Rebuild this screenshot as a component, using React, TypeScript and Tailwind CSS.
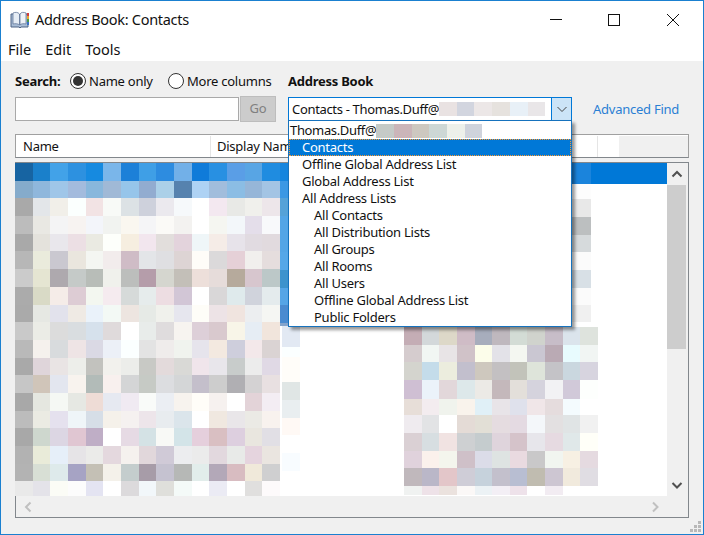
import { Fragment } from "react";

const font = "[font-family:'Noto_Sans',sans-serif]";

const leftRows = [
  "1764a2 1a80cb 42a2e8 2d91e0 168ae0 7ab6ea 1c80d8 3f9fe6 2d8ce0 72b0e8 0f7bd9 2890e2 5a9ee6 58a5e4 1f8ce0",
  "85abcb 8fb7dc 9fc6e8 a3bbdd 88b7dc a0b9d6 96c5ea 92acd0 abd0e8 5682ae aed2f4 a1bddc 8bbde4 96b6d8 a3c4e4",
  "a9a9a9 e3e6e9 f1efe9 fbfffe f2e3e4 f8faf7 dce2e5 ced1dc ebe9ee f6f9fb ffffff f3e8f0 e8e9e6 f0f0ec ede6ea",
  "bcbcbc e9e8e3 f4f4f5 f7f3f1 f3f5fa f1f3f0 faf7f0 f5f5f7 fbfaf7 f3f2f0 ffffff f5f6f1 f3f7fa e4deea f8f9fb",
  "a9a9a9 e4e2dc e9e7ec ecdfe4 eaeae2 fdfffb f6eee0 f2e6ee e2dedc e3d3dc eff6f8 f5ece7 e7e3ea e1dbe1 e1dade",
  "b7b7b7 eaebdc cac8d0 eae6de f4f6f2 f2ecec cfbcc6 e3e5e8 dfdfe2 ddd4d4 fefcf8 dbd9da e5d0d7 f1efed e5dddd",
  "cbcbcb e5e5d2 aea9ae c5cac8 b8bdb8 f0f1ec bcbebc b59daa d5d6cf c3bfb8 eddfda e6dcda b6aa9c d7c6ce bcc8c8",
  "ababab d9dac6 f5ece8 ddccd4 f3f7f0 f5ebef d6dad9 e6ecec eddde2 d2c6d6 ffffff d9d7d8 dfeaec d0d3dc e4ebed",
  "aaaaaa e6e8e3 e2e2ec efeae4 eaf2fa f3f9f5 ede5e0 e6eae6 f0f1ec e6e6ee fefdf8 ede3e6 f0e4df eceef0 f5f6f3",
  "c9c9c9 ebece6 dcdcdc d9dde0 d6e1ec dfdadb ffffff e8ecea dfdcdd f7f4f0 ddcfd8 d9c9ce f8f5e8 e6edf4 f1e5dc",
  "b9b9b9 f5f1ed d8dbdd eee4e5 dad9e4 ecf0f7 fbffff e3e3e3 efeceb f0f3ee e6e4ec f3e9e0 cecedc f3e8ea dad3d3",
  "a9a9a9 dfd5da e9e4e4 edeeea c2c2be f2f1ed ecedea c8c9c5 e3dadb d9d9d6 f0e5eb e8e6eb c8cccb ececec e0d9e5",
  "c6c6c6 d0c5b9 e3e6ef f8f3ee b2bbb8 f8f0ee d4d5d6 c6cac5 dcdde0 d4d6d7 c4bfcb cdcdcd b0afb3 d4d2d3 e8e0e1",
  "a8a8a8 e5e7e0 f5f8f4 e6e8e3 eedcd6 e6e9f1 f0eaf2 f9fbf9 ebeef3 f7f3ee fffdf8 f6f1ef ffffff e3d3d8 f3edf3",
  "bcbcbc ebebe3 e5e1ee eff5f8 d6dee7 f5f1ea f5f1f0 ede5ea e8ecef dbe5eb ffffff f0e8e0 e9e6e9 ebeae5 f8f2ee",
  "a8a8a8 ced7ce dcd6e3 e0c6d2 bfaec6 ffffff e6dae4 d4e2e5 f8f9f6 d3e4e8 e5cfdc d9bfc2 ddcfdf e9e6df e1dfe5",
  "b2b2b2 e9ebd9 e6eff9 e6e4e7 ebebe9 e4d8de f5f1ee e1d7db d0cad7 ecedef ebebeb e2d8de e8eae8 e5d4de eae5e0",
  "b3b3b3 d8dfd5 deeaeb a6a3c4 c4c0b5 f4f1ea c4cdcd a79ca8 c5c2d0 b6b8b6 e2edeb b3a8b8 d8bcc1 f0e9da cfcfd0",
  "e9e9e9 e4e3e9 fbfcf6 fcfcfc e4e4f2 ffffff dcdadc f2f7fa dfdfdb f4faf8 ffffff ebebf4 ffffff e0dfde fdfafb",
];

const rightRows = [
  "c4adb5 d3d8da ddd8c8 cfbcc6 a7adbc bfb8be d3dcd5 d0d3cd c7bdc8 dbe4ec dee3dd",
  "d5ccce f1f6f3 e8e4e6 d0c2c8 fcfdea e3e2e8 f4f7f1 cac7d2 baaab4 e8fbfe f1f5f3",
  "d4d4ce c4dcea ecedde c2bfcd cec8be c3c0c2 c2c3ba dee4da c4c3c7 cad7df d7d4df",
  "cfbfd3 ebf2fa e2d7da dde8ea eceae6 c4b8bb e3dfda d5d3dd f2f2f4 d1c9d9 fdfffd",
  "e7ded8 f3ecef f0f3ed f9f3ec e0f0f7 e8e4e8 dfe1ec f0e6e8 e5dcdd f4fbfe ffffff",
  "efebef e2e3e5 ffffff e4dbd6 e2dfd6 e5dce0 e4dae2 f4f7fa e3e0e1 e0e4e5 f1f1f1",
  "dad0d4 d7dee1 f1e3e2 ced0d2 c5ccce dfd4dc d5c3ca e7e6eb e6dae1 e0e8e9 fffff8",
  "e0d2dc fbf1ec f4f5ed cfc0c8 dbdce8 dee3e2 e9dae0 c9c8c9 f1f5f0 f7f0e3 e5dae0",
  "c0b8bc bab7c8 e3c6c9 cfcdd7 c6d2dc c3c0cc b8bed2 c0bcb0 cdc6d2 f1eadd e0dde3",
  "f0f2f1 eee2e8 ebe2de fbf8f7 ecf2f5 f3eff5 eee2ea ffffff f2ecf2 ffffff ffffff",
];

// [color, height] strips of the narrow columns
const colBTop: [string, number][] = [
  ["1585de", 18], ["3b98e4", 17], ["55a2d8", 18], ["53a5e6", 18], ["53a5e6", 18],
  ["55a7e8", 18], ["3d93cd", 18], ["55a5e6", 17], ["4a8bd0", 18], ["84a4cc", 3],
];
const colBBottom: [string, number][] = [
  ["e2e9f3", 21], ["fbffff", 10], ["fffdf9", 25], ["e0e6e5", 18], ["e9eef0", 18],
  ["fff9f5", 17], ["ffffff", 18], ["f8fcff", 18],
];
const colC: [string, number][] = [
  ["fdfdfd", 15], ["e8e8e8", 18], ["bcbfc0", 18], ["d6dadc", 17], ["fbfbfb", 18],
  ["d8e0e6", 18], ["fbfbfb", 17], ["f0f0f0", 17],
];
const rightHeights = [18, 17, 18, 19, 16, 18, 18, 17, 18, 9];

const lists = [
  { label: "Offline Global Address List", sub: false },
  { label: "Global Address List", sub: false },
  { label: "All Address Lists", sub: false },
  { label: "All Contacts", sub: true },
  { label: "All Distribution Lists", sub: true },
  { label: "All Groups", sub: true },
  { label: "All Rooms", sub: true },
  { label: "All Users", sub: true },
  { label: "Offline Global Address List", sub: true },
  { label: "Public Folders", sub: true },
];

function Strip({ items, className }: { items: [string, number][]; className: string }) {
  return (
    <div className={className}>
      {items.map(([c, h], i) => (
        <div key={i} style={{ backgroundColor: `#${c}`, height: h }} />
      ))}
    </div>
  );
}

function Swatches({ colors }: { colors: string }) {
  return (
    <span className="flex h-[14px] shrink-0">
      {colors.split(" ").map((c, i) => (
        <span key={i} className="w-[17.7px]" style={{ backgroundColor: `#${c}` }} />
      ))}
    </span>
  );
}

function Radio({ checked, label }: { checked?: boolean; label: string }) {
  return (
    <div className="flex items-center gap-[3px]">
      <span className="flex h-4 w-4 items-center justify-center rounded-full border border-[#333] bg-white">
        {checked && <span className="h-[10px] w-[10px] rounded-full bg-[#333]" />}
      </span>
      <span className="pt-[1px]">{label}</span>
    </div>
  );
}

function Chevron({ d, className }: { d: string; className: string }) {
  return (
    <svg viewBox="0 0 12 12" className={className} fill="none" stroke="currentColor" strokeWidth="2">
      <path d={d} />
    </svg>
  );
}

export default function App() {
  return (
    <div className={`${font} relative flex h-[535px] w-[704px] flex-col overflow-hidden border border-[#1a80d0] bg-white text-[13px] tracking-[-0.25px] text-[#111]`}>
      {/* title bar */}
      <div className="flex h-[36px] shrink-0 items-center pl-[9px] pt-[1px]">
        <svg width="20" height="18" viewBox="0 0 20 18">
          <path d="M1 3h8l1 1 1-1h7v13h-7l-1 1-1-1H1z" fill="#a9bdd6" stroke="#4f6486" />
          <path d="M3 2c2-1 5-1 6.500 1v11C8 12.500 5 12.500 3 13z" fill="#e6edf5" stroke="#64789a" strokeWidth=".8" />
          <path d="M16 2c-2-1-5-1-6 1v11c1-1.500 4-1.500 6-1z" fill="#eef2f7" stroke="#64789a" strokeWidth=".8" />
          <rect x="17" y="2" width="2" height="3" fill="#d23b3b" />
          <rect x="17" y="5" width="2" height="3" fill="#e8a832" />
          <rect x="17" y="8" width="2" height="3" fill="#4c9b4a" />
          <rect x="17" y="11" width="2" height="3" fill="#3a72c4" />
        </svg>
        <span className="ml-[5px] text-[14.5px] tracking-[-0.3px]">Address Book: Contacts</span>
        <div className="ml-auto flex items-center pr-[24px]">
          <svg width="12" height="12" viewBox="0 0 12 12" className="mr-[46px]" stroke="#111" fill="none"><path d="M0 5.500h12" /></svg>
          <svg width="12" height="12" viewBox="0 0 12 12" className="mr-[47px]" stroke="#111" fill="none"><rect x=".5" y=".5" width="11" height="11" /></svg>
          <svg width="12" height="12" viewBox="0 0 12 12" stroke="#111" fill="none"><path d="M0 0l12 12M12 0L0 12" /></svg>
        </div>
      </div>

      {/* menu */}
      <div className="flex h-[24px] shrink-0 items-center gap-[14px] pl-[7px] pt-[1px] text-[14.5px] tracking-normal">
        <span>File</span>
        <span>Edit</span>
        <span>Tools</span>
      </div>

      {/* body */}
      <div className="relative flex flex-1 flex-col bg-[#f0f0f0] pl-[14px] pt-[11px]">
        <div className="flex h-[18px] items-center">
          <span className="w-[55px] pt-[1px] font-bold">Search:</span>
          <div className="w-[98px]"><Radio checked label="Name only" /></div>
          <div className="w-[120px]"><Radio label="More columns" /></div>
          <span className="pt-[1px] font-bold">Address Book</span>
        </div>

        <div className="mt-[6px] flex h-[26px] items-start">
          <div className="mt-px h-[24px] w-[224px] border border-[#a9a9a9] bg-white" />
          <div className="ml-px flex h-[26px] w-[36px] items-center justify-center border border-[#bdbdbd] bg-[#cccccc] text-[#808080]">Go</div>
          <div className="ml-[12px] mt-px flex h-[24px] w-[284px] items-center border border-[#0078d7] bg-white pl-[3px]">
            <span className="whitespace-nowrap pt-[1px] tracking-[-0.33px]">Contacts - Thomas.Duff@</span>
            <Swatches colors="e9e2e2 d2d5df ece7e7 e6e2de e8f0f7 e9e6e8" />
            <div className="ml-auto flex h-full w-[20px] shrink-0 items-center justify-center border-l border-[#0078d7] bg-[#cce4f7] text-[#444]">
              <Chevron d="M1.500 4l4.500 4.500L10.500 4" className="h-3 w-3 [&_path]:[stroke-width:1]" />
            </div>
          </div>
          <span className="ml-[21px] mt-[4px] text-[#2a7fd4]">Advanced Find</span>
        </div>

        {/* column header */}
        <div className="mt-[12px] flex h-[24px] w-[674px] items-stretch border border-[#a0a0a0] border-b-[#82878c] bg-white pt-[1px]">
          <div className="flex w-[195px] items-center border-r border-[#e5e5e5] pl-[7px]">Name</div>
          <div className="flex w-[387px] items-center border-r border-[#e5e5e5] pl-[6px]">Display Name</div>
          <div className="w-[21px]" />
          <div className="flex-1 bg-[#f0f0f0]" />
        </div>

        {/* list */}
        <div className="mt-[4px] w-[674px] border-r border-t border-[#82878c]">
          <div className="flex h-[333px]">
            <div className="grid w-[265px] grid-cols-[repeat(15,1fr)] grid-rows-[repeat(18,17.7px)_14.400px]">
              {leftRows.map((row, r) => (
                <Fragment key={r}>
                  {row.split(" ").map((c, i) => (
                    <div key={i} style={{ backgroundColor: `#${c}` }} />
                  ))}
                </Fragment>
              ))}
            </div>
            <div className="w-[20px] bg-white">
              <Strip items={colBTop} className="w-[18px]" />
              <Strip items={colBBottom} className="ml-[2px] w-[18px]" />
            </div>
            <div className="w-[367px] bg-white">
              <div className="flex h-[21px] bg-[#0078d7]">
                <div className="ml-[272px] w-[19px] bg-[#1b84dc]" />
              </div>
              <Strip items={colC} className="ml-[272px] w-[19px]" />
              <div className="ml-[104px] mt-[5px] w-[194px]">
                {rightRows.map((row, r) => (
                  <div key={r} className="flex" style={{ height: rightHeights[r] }}>
                    {row.split(" ").map((c, i) => (
                      <div key={i} className="flex-1" style={{ backgroundColor: `#${c}` }} />
                    ))}
                  </div>
                ))}
              </div>
            </div>
            {/* vertical scrollbar */}
            <div className="flex w-[21px] flex-col bg-[#f0f0f0] text-[#505050]">
              <div className="flex h-[22px] w-[19px] items-center justify-center">
                <Chevron d="M1.500 8.500L6 4l4.500 4.500" className="h-3 w-3" />
              </div>
              <div className="h-[164px] w-[19px] bg-[#cdcdcd]" />
              <div className="mt-auto flex h-[22px] w-[19px] items-center justify-center">
                <Chevron d="M1.500 4L6 8.500 10.500 4" className="h-3 w-3" />
              </div>
            </div>
          </div>
          {/* horizontal scrollbar */}
          <div className="flex h-[22px] items-center justify-between border-b border-l border-[#82878c] bg-[#f0f0f0] pl-[6px] pr-[27px] text-[#c0c0c0]">
            <Chevron d="M8.500 1.500L4 6l4.500 4.500" className="h-3 w-3" />
            <Chevron d="M4 1.500L8.500 6 4 10.500" className="h-3 w-3" />
          </div>
        </div>

        {/* resize grip */}
        <svg width="12" height="12" viewBox="0 0 12 12" className="absolute bottom-[1px] right-[1px]" fill="#b8b8b8">
          <rect x="8" y="0" width="3" height="3" />
          <rect x="4" y="4" width="3" height="3" />
          <rect x="8" y="4" width="3" height="3" />
          <rect x="0" y="8" width="3" height="3" />
          <rect x="4" y="8" width="3" height="3" />
          <rect x="8" y="8" width="3" height="3" />
        </svg>

        {/* open dropdown */}
        <div className="absolute left-[287px] top-[59px] w-[284px] border border-[#1672bd] bg-white shadow-[3px_3px_3px_rgba(0,0,0,0.4)]">
          <div className="flex h-[18px] items-center whitespace-nowrap pl-[1px] pt-[1px] tracking-[-0.35px]">
            <span>Thomas.Duff@</span>
            <Swatches colors="c5cac7 cbb5b9 cdc8c0 cdd7d5 edf0ea cfd3dc" />
          </div>
          <div className="flex h-[17px] items-center border border-dotted border-[#ff9a2e] bg-[#0078d7] pl-[12px] text-white">Contacts</div>
          {lists.map((item, i) => (
            <div key={i} className={`flex h-[17px] items-center ${item.sub ? "pl-[25px]" : "pl-[13px]"}`}>
              {item.label}
            </div>
          ))}
        </div>
      </div>
    </div>
  );
}
